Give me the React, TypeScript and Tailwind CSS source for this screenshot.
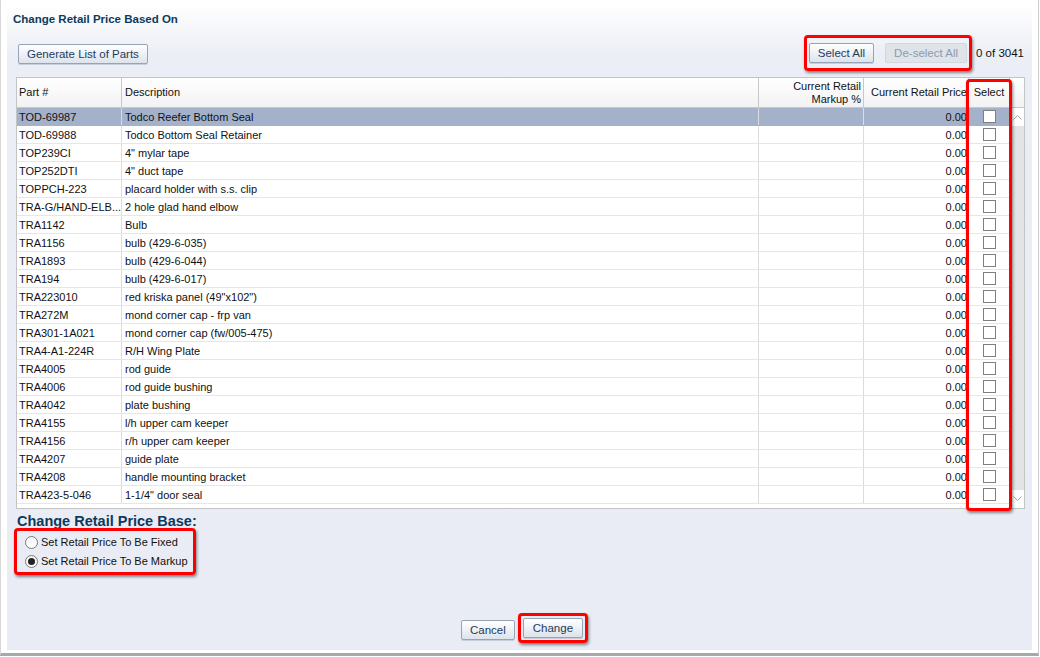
import React from "react";

const rows: [string, string][] = [
  ["TOD-69987", "Todco Reefer Bottom Seal"],
  ["TOD-69988", "Todco Bottom Seal Retainer"],
  ["TOP239CI", "4\" mylar tape"],
  ["TOP252DTI", "4\" duct tape"],
  ["TOPPCH-223", "placard holder with s.s. clip"],
  ["TRA-G/HAND-ELB...", "2 hole glad hand elbow"],
  ["TRA1142", "Bulb"],
  ["TRA1156", "bulb (429-6-035)"],
  ["TRA1893", "bulb (429-6-044)"],
  ["TRA194", "bulb (429-6-017)"],
  ["TRA223010", "red kriska panel (49\"x102\")"],
  ["TRA272M", "mond corner cap - frp van"],
  ["TRA301-1A021", "mond corner cap (fw/005-475)"],
  ["TRA4-A1-224R", "R/H Wing Plate"],
  ["TRA4005", "rod guide"],
  ["TRA4006", "rod guide bushing"],
  ["TRA4042", "plate bushing"],
  ["TRA4155", "l/h upper cam keeper"],
  ["TRA4156", "r/h upper cam keeper"],
  ["TRA4207", "guide plate"],
  ["TRA4208", "handle mounting bracket"],
  ["TRA423-5-046", "1-1/4\" door seal"],
];

const btn =
  "h-[20px] px-[8px] border border-[#97a3b6] rounded-[2px] bg-gradient-to-b from-white to-[#dde3ec] text-[#1d3c5c] text-[11.5px] leading-[18px] shadow-[0_1px_0_#c9cfd9]";

const redBox = "border-[3px] border-[#f00] rounded-[4px] shadow-[1px_2px_3px_rgba(0,0,0,0.45)]";

function Check() {
  return <div className="w-[13px] h-[13px] border border-[#7f7f7f] bg-white" />;
}

function Radio({ on }: { on?: boolean }) {
  return (
    <div className="w-[13px] h-[13px] rounded-full border border-[#7a7a7a] bg-gradient-to-b from-[#f4f4f4] to-white flex items-center justify-center">
      {on && <div className="w-[7px] h-[7px] rounded-full bg-[#222]" />}
    </div>
  );
}

export default function App() {
  return (
    <div
      className="w-[1040px] h-[657px] bg-white text-[#111] text-[11px]"
      style={{ fontFamily: "Tahoma, 'Liberation Sans', Arial, sans-serif" }}
    >
      <div className="h-[656px] w-[1039px] border-l border-[#d8d8d8] border-b-[3px] border-b-[#a8a8a8] border-r border-r-[#cfcfcf] pt-[4px] pl-[6px] pr-[6px] pb-[3px]">
        <div className="h-full flex flex-col bg-gradient-to-b from-white via-[#eceef6] via-[8%] to-[#e9ecf5]">
          <div className="pl-[6px] pt-[8px] h-[26px] text-[11.5px] font-bold text-[#0d3a5c] leading-[14px]">
            Change Retail Price Based On
          </div>

          <div className="flex items-center h-[47px] pl-[11px] pr-[8px]">
            <button className={btn}>Generate List of Parts</button>
            <div className="flex-1" />
            <div className={`${redBox} flex items-center gap-[11px] h-[36px] px-[2px] -mt-[2px]`}>
              <button className={btn}>Select All</button>
              <button className="h-[20px] px-[8px] border border-[#d3d8df] rounded-[2px] bg-[#dfe3ea] text-[#8e9aaa] text-[11.5px] leading-[18px]">
                De-select All
              </button>
            </div>
            <div className="ml-[4px] text-[11.5px]">0 of 3041</div>
          </div>

          <div className="relative ml-[9px] mr-[7px] h-[432px] border border-[#c4c4c4] bg-white flex flex-col">
            <div className="flex h-[30px] border-b border-[#c8c8c8] bg-gradient-to-b from-white to-[#f2f2f2] leading-[13px]">
              <div className="w-[105px] border-r border-[#c8c8c8] pl-[2px] flex items-center">Part #</div>
              <div className="w-[637px] border-r border-[#c8c8c8] pl-[3px] flex items-center">Description</div>
              <div className="w-[105px] border-r border-[#c8c8c8] pr-[2px] flex items-center justify-end text-right">
                Current Retail<br />Markup %
              </div>
              <div className="w-[105px] border-r border-[#c8c8c8] pr-[1px] flex items-center justify-end whitespace-nowrap">
                Current Retail Price
              </div>
              <div className="w-[41px] border-r border-[#c8c8c8] flex items-center justify-center">Select</div>
              <div className="flex-1" />
            </div>
            <div className="flex flex-1">
              <div className="w-[993px] flex flex-col">
                {rows.map(([part, desc], i) => (
                  <div
                    key={part}
                    className={`flex h-[18px] border-b leading-[19px] ${i === 0 ? "bg-[#a4b1cb] border-[#a4b1cb]" : "border-[#e6e6e6]"}`}
                  >
                    <div className="w-[105px] border-r border-[#dcdcdc] pl-[2px] whitespace-nowrap">{part}</div>
                    <div className="w-[637px] border-r border-[#dcdcdc] pl-[3px]">{desc}</div>
                    <div className="w-[105px] border-r border-[#dcdcdc]" />
                    <div className="w-[105px] border-r border-[#dcdcdc] pr-[1px] text-right">0.00</div>
                    <div className="w-[41px] flex items-center justify-center">
                      <Check />
                    </div>
                  </div>
                ))}
              </div>
              <div className="flex-1 flex flex-col border-l border-[#e2e2e2]">
                <div className="h-[18px] bg-white flex items-center justify-center">
                  <svg width="9" height="6" viewBox="0 0 9 6"><path d="M0.5 5.5 L4.5 1.5 L8.5 5.5" fill="none" stroke="#a0a0a0" /></svg>
                </div>
                <div className="flex-1 bg-[#e4e4e4]" />
                <div className="h-[18px] bg-white flex items-center justify-center">
                  <svg width="9" height="6" viewBox="0 0 9 6"><path d="M0.5 0.5 L4.5 4.5 L8.5 0.5" fill="none" stroke="#a0a0a0" /></svg>
                </div>
              </div>
            </div>
            <div className={`absolute left-[949px] top-[1px] w-[46px] h-[432px] ${redBox}`} />
          </div>

          <div className="pl-[10px] mt-[3px] text-[14.5px] font-bold text-[#0d3a5c] leading-[18px]">
            Change Retail Price Base:
          </div>
          <div className={`${redBox} ml-[7px] -mt-[2px] w-[182px] h-[47px] flex flex-col justify-center gap-[6px] pl-[8px]`}>
            <div className="flex items-center gap-[3px] whitespace-nowrap leading-[13px]">
              <Radio />
              <span>Set Retail Price To Be Fixed</span>
            </div>
            <div className="flex items-center gap-[3px] whitespace-nowrap leading-[13px]">
              <Radio on />
              <span>Set Retail Price To Be Markup</span>
            </div>
          </div>

          <div className="flex-1" />
          <div className="flex justify-center items-end gap-[3px] pb-[7px] pl-[10px]">
            <button className={`${btn} h-[19px] leading-[17px] mb-[3px]`}>Cancel</button>
            <div className={`${redBox} p-[2px]`}>
              <button className={`${btn} h-[19px] leading-[17px] px-[9px]`}>Change</button>
            </div>
          </div>
        </div>
      </div>
    </div>
  );
}
